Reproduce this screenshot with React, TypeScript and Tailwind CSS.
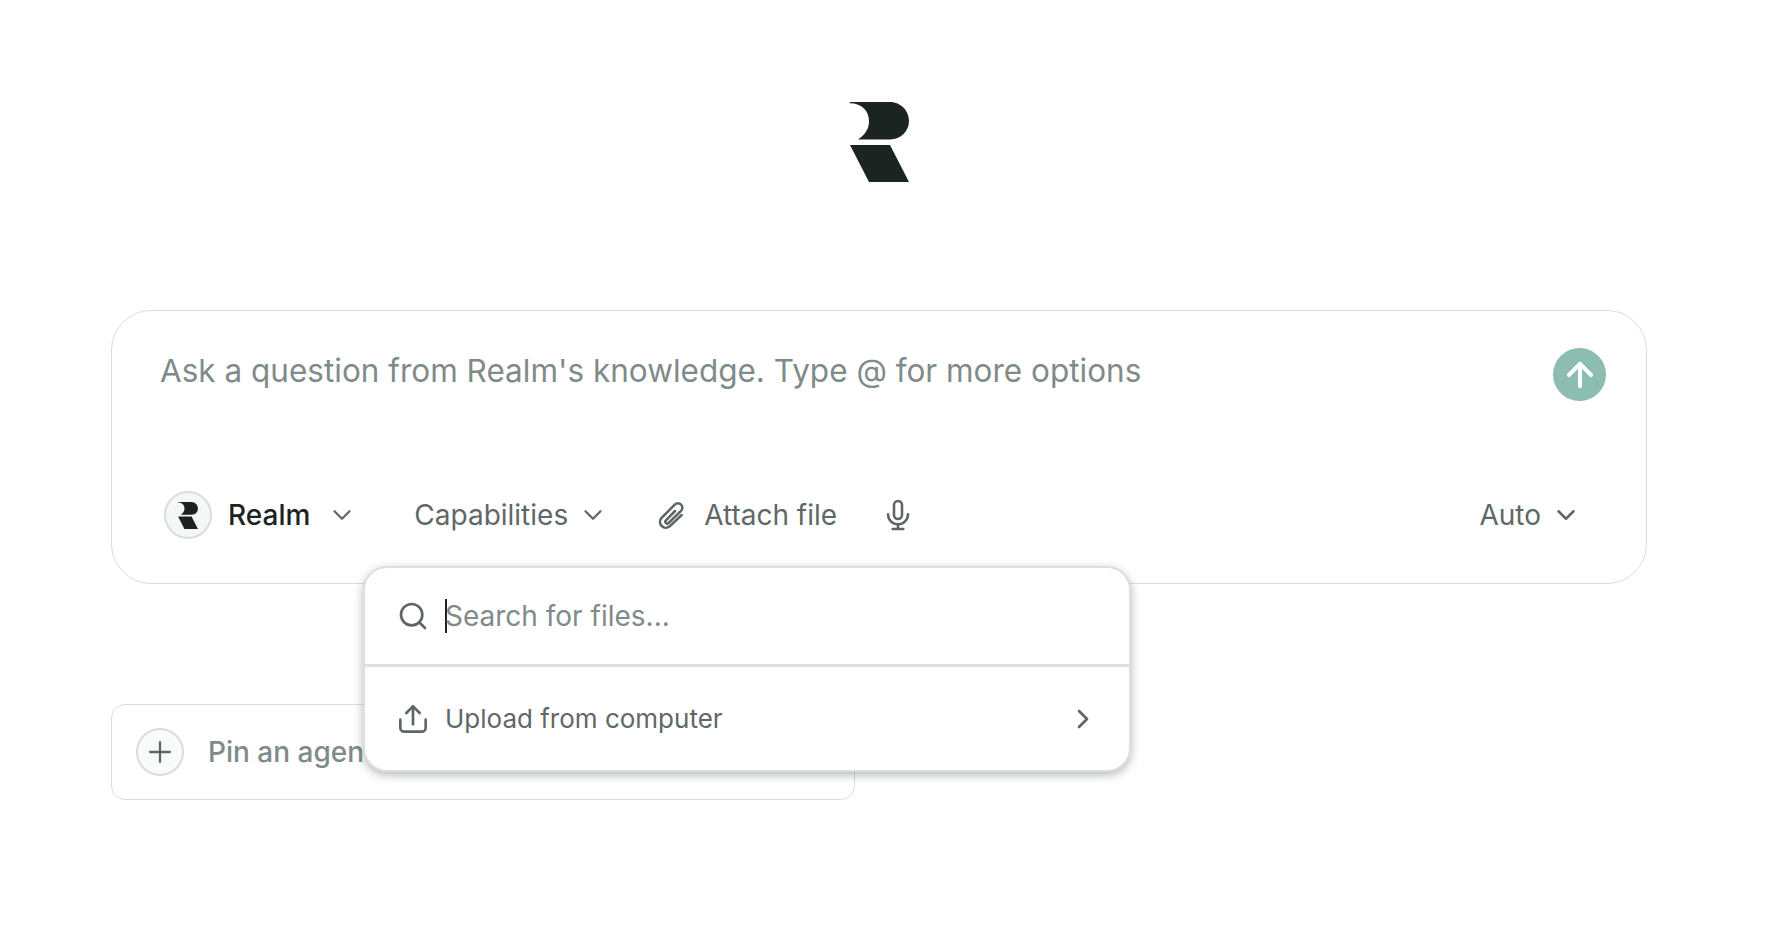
import { ArrowUp, ChevronDown, ChevronRight, Plus, Search } from "lucide-react"

function RealmLogo({ className }: { className?: string }) {
  return (
    <svg className={className} viewBox="0 0 59 80" fill="#1c2422">
      <path d="M0 0H40C51 0 59 9 59 19C59 29 51 37.5 40 37.5H8C15 33 19 27 19 19C19 9 12 1.2 0 1.2Z" />
      <path d="M0 43H40L59 80H19Z" />
    </svg>
  )
}

function PaperclipIcon() {
  return (
    <svg className="w-[32px] h-[32px] text-[#5d6665]" viewBox="0 0 24 24" fill="none" stroke="currentColor" strokeWidth={1.9} strokeLinecap="round" strokeLinejoin="round">
      <path d="M20 12 11 20.5A4.4 4.4 0 0 1 4.8 14.3L14.8 4.2A3.3 3.3 0 0 1 19.5 8.9L10.2 18A1.4 1.4 0 0 1 8.2 16L15 9" />
    </svg>
  )
}

function MicIcon() {
  return (
    <svg className="w-[32px] h-[32px] text-[#5d6665]" viewBox="0 0 24 24" fill="none" stroke="currentColor" strokeWidth={1.9} strokeLinecap="round" strokeLinejoin="round">
      <rect x="9" y="1.5" width="6" height="13.5" rx="3" />
      <path d="M4.5 11.5a7.5 7.5 0 0 0 15 0" />
      <path d="M12 19v3" />
      <path d="M8 22.5h8" />
    </svg>
  )
}

function UploadIcon() {
  return (
    <svg className="w-[32px] h-[32px] text-[#5d6665]" viewBox="0 0 24 24" fill="none" stroke="currentColor" strokeWidth={2} strokeLinecap="round" strokeLinejoin="round">
      <path d="M2.5 12.5v6a3 3 0 0 0 3 3h13a3 3 0 0 0 3-3v-6" />
      <path d="M12 16V2.5" />
      <path d="M7 7.5l5-5 5 5" />
    </svg>
  )
}

export default function App() {
  return (
    <div className="min-h-screen bg-white font-['Inter',sans-serif] pl-[111px] pt-[102px]">
      <div className="relative w-[1536px]">
        <div className="flex justify-center">
          <RealmLogo className="w-[59px] h-[80px]" />
        </div>

        {/* Prompt box */}
        <div className="mt-[128px] h-[274px] rounded-[40px] border border-[#d8dedc] pl-[48px] pr-[51px] pt-[40px] pb-[44px] flex flex-col justify-between">
          <div className="flex justify-between items-start">
            <span className="text-[31.5px] leading-[40px] text-[#7f8b89]">
              Ask a question from Realm's knowledge. Type @ for more options
            </span>
            <button className="w-[53px] h-[53px] -mr-[11px] -mt-[3px] rounded-full bg-[#8dbcb1] flex items-center justify-center text-white">
              <ArrowUp className="w-[38px] h-[38px]" strokeWidth={2.6} />
            </button>
          </div>

          <div className="flex items-center text-[#5f6867] text-[28px] leading-[48px] ml-[4px]">
            <div className="w-[48px] h-[48px] rounded-full bg-[#f5f6f6] border-2 border-[#d8dedc] flex items-center justify-center">
              <RealmLogo className="w-[20px] h-[27px]" />
            </div>
            <span className="ml-[16px] font-medium text-[#1c2422]">Realm</span>
            <ChevronDown className="ml-[17px] w-[30px] h-[30px]" strokeWidth={1.8} />
            <span className="ml-[57px]">Capabilities</span>
            <ChevronDown className="ml-[10px] w-[30px] h-[30px]" strokeWidth={1.8} />
            <span className="ml-[47px]"><PaperclipIcon /></span>
            <span className="ml-[17px]">Attach file</span>
            <span className="ml-[45px]"><MicIcon /></span>
            <div className="ml-auto flex items-center mr-[14px]">
              <span>Auto</span>
              <ChevronDown className="ml-[10px] w-[30px] h-[30px]" strokeWidth={2} />
            </div>
          </div>
        </div>

        {/* Pinned agent card */}
        <div className="mt-[120px] w-[744px] h-[96px] rounded-[14px] border border-[#d8dedc] flex items-center pl-[24px]">
          <div className="w-[48px] h-[48px] rounded-full bg-[#f9fafa] border-2 border-[#d8dedc] flex items-center justify-center">
            <Plus className="w-[34px] h-[34px] text-[#5d6665]" strokeWidth={1.6} />
          </div>
          <span className="ml-[24px] text-[28px] font-medium text-[#7f8b89]">Pin an agent</span>
        </div>

        {/* Attach file menu */}
        <div className="absolute left-[252px] top-[464px] w-[768px] h-[206px] rounded-[24px] bg-white border-2 border-[#dbe0df] shadow-[0_3px_10px_rgba(60,70,68,0.38)] flex flex-col">
          <div className="h-[99px] flex items-center pl-[32px] border-b-[3px] border-[#dbe2e0]">
            <Search className="w-[32px] h-[32px] text-[#5d6665]" strokeWidth={2} />
            <div className="ml-[16px] w-[2px] h-[34px] bg-[#1c2422]" />
            <span className="-ml-[2px] text-[28px] text-[#7f8b89]">Search for files...</span>
          </div>
          <div className="flex-1 flex items-center pl-[32px] pr-[30px]">
            <UploadIcon />
            <span className="ml-[16px] text-[26px] text-[#5f6867]">Upload from computer</span>
            <ChevronRight className="ml-auto w-[32px] h-[32px] text-[#5d6665]" strokeWidth={2} />
          </div>
        </div>
      </div>
    </div>
  )
}
